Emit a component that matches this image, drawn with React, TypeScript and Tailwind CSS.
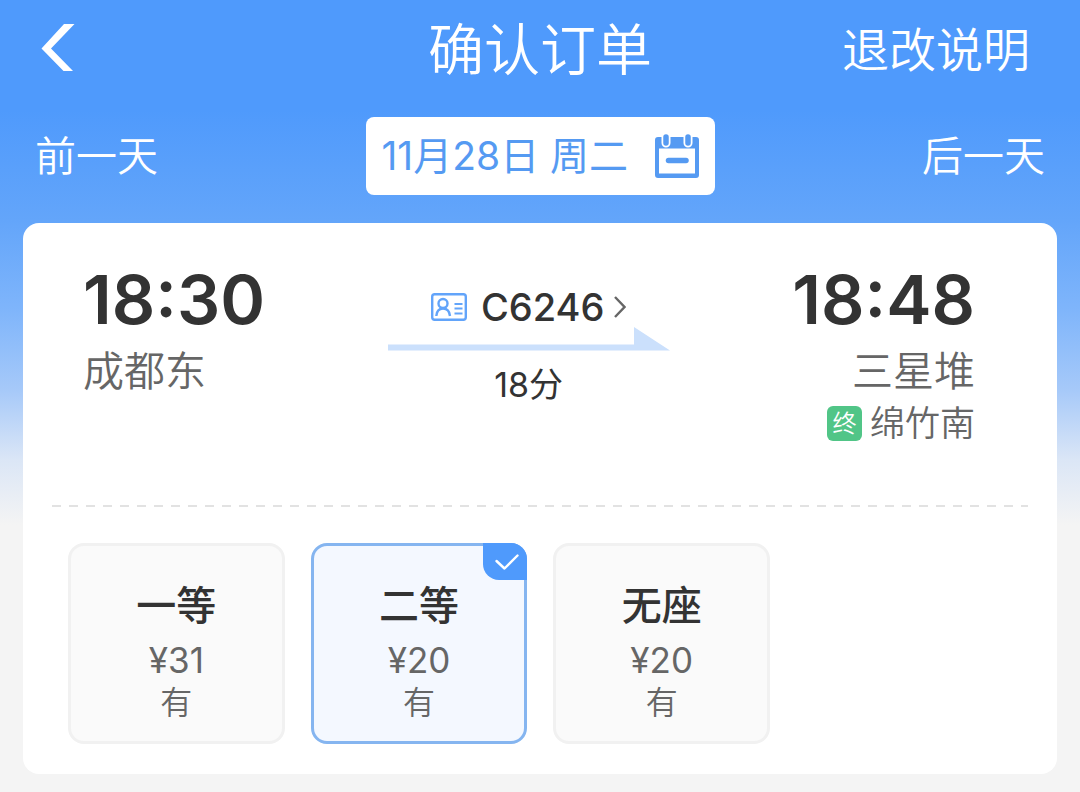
import { useState } from "react";

type Seat = {
  id: string;
  name: string;
  price: number;
  stock: string;
};

const seats: Seat[] = [
  { id: "first", name: "一等", price: 31, stock: "有" },
  { id: "second", name: "二等", price: 20, stock: "有" },
  { id: "standing", name: "无座", price: 20, stock: "有" },
];

function BackIcon() {
  return (
    <svg className="h-12 w-9" viewBox="0 0 36 48" fill="none" aria-hidden>
      <path d="M24 0h10.500L11 24.500 33 47H23.500L1.500 24.500z" fill="#fff" />
    </svg>
  );
}

function CalendarIcon() {
  return (
    <svg className="h-11 w-11 shrink-0" viewBox="0 0 44 44" fill="none" aria-hidden>
      <path
        fillRule="evenodd"
        d="M3 3h38a3 3 0 0 1 3 3v35a3 3 0 0 1-3 3H3a3 3 0 0 1-3-3V6a3 3 0 0 1 3-3zM4 14.500V39.500h36V14.500z"
        fill="#559af2"
      />
      <path d="M11 3v6M33 3v6" stroke="#fff" strokeWidth="9" strokeLinecap="round" />
      <path d="M11 3v6M33 3v6" stroke="#559af2" strokeWidth="5.500" strokeLinecap="round" />
      <path d="M13.500 26.500h17.500" stroke="#559af2" strokeWidth="5.500" strokeLinecap="round" />
    </svg>
  );
}

function IdCardIcon() {
  return (
    <svg className="h-7 w-9 shrink-0" viewBox="0 0 36 28" fill="none" stroke="#62a4fa" aria-hidden>
      <rect x="1.200" y="1.200" width="33.600" height="25.600" rx="2.500" strokeWidth="2.400" />
      <circle cx="12" cy="10.500" r="4.500" strokeWidth="2.400" />
      <path d="M5.300 23c.4-4.500 2.600-7.500 6.700-7.500s6.500 3 7 7.500" strokeWidth="2.400" />
      <path d="M23.500 11h8M23.500 15.500h8M23.500 20.500h8" strokeWidth="2" />
    </svg>
  );
}

// 车次下方的方向箭头
function RouteArrow() {
  return (
    <svg className="h-6 w-full" viewBox="0 0 282 24" fill="#cbe0fc" aria-hidden>
      <path d="M0 17.500h246V0l36 23.500H0z" />
    </svg>
  );
}

function SeatOption({
  seat,
  checked,
  onSelect,
}: {
  seat: Seat;
  checked: boolean;
  onSelect: () => void;
}) {
  return (
    <label
      className={`relative flex flex-1 cursor-pointer flex-col items-center rounded-2xl border-3 pt-8 pb-[18px] ${
        checked ? "border-[#85b5f0] bg-[#f4f8ff]" : "border-[#f1f1f1] bg-[#fafafa]"
      }`}
    >
      <input
        type="radio"
        name="seat"
        value={seat.id}
        checked={checked}
        onChange={onSelect}
        className="absolute inset-0 cursor-pointer appearance-none"
      />
      <span className="text-[40px] leading-[56px] font-medium text-[#333]">{seat.name}</span>
      <span className="mt-1 text-[35px] leading-[44px] font-normal text-[#666]">¥{seat.price}</span>
      <span className="text-[32px] leading-[41px] font-[350] text-[#666]">{seat.stock}</span>
      {checked && (
        <span className="absolute -top-[3px] -right-[3px] flex h-[37px] w-11 items-center justify-center rounded-tr-2xl rounded-bl-2xl bg-[#4f9afc]">
          <svg className="ml-1 h-4 w-6" viewBox="0 0 24 16" fill="none" aria-hidden>
            <path
              d="M1.500 7 9.500 14.500 22.500 1.500"
              stroke="#fff"
              strokeWidth="2.400"
              strokeLinecap="round"
              strokeLinejoin="round"
            />
          </svg>
        </span>
      )}
    </label>
  );
}

export default function App() {
  const [selected, setSelected] = useState("second");

  return (
    <div className="min-h-screen bg-[#f4f4f4] bg-[linear-gradient(180deg,#4f9afc_0px,#4f9afc_110px,#63a5fa_220px,#7fb5fb_310px,#a6c9f9_390px,#dbe6f6_460px,#f4f4f4_525px)] pb-[18px] font-['Inter','Noto_Sans_CJK_SC',sans-serif]">
      <header className="grid grid-cols-3 items-center px-10 pt-1.5 text-white">
        <button type="button" aria-label="返回" className="justify-self-start">
          <BackIcon />
        </button>
        <h1 className="pt-1 text-center text-[56px] leading-[80px] font-[350] whitespace-nowrap">
          确认订单
        </h1>
        <a
          href="#rules"
          className="mr-[10px] justify-self-end pt-1 text-[47px] leading-[80px] font-[350] whitespace-nowrap"
        >
          退改说明
        </a>
      </header>

      <nav className="mt-[27px] flex items-center justify-between px-[35px] text-white">
        <button type="button" className="text-[41px] leading-[56px] font-[350]">
          前一天
        </button>
        <button
          type="button"
          className="flex h-[78px] w-[349px] items-center justify-between rounded-lg bg-white px-4 text-[#559af2]"
        >
          <span className="text-[39px] leading-[56px] font-normal whitespace-nowrap">
            11月28日 周二
          </span>
          <CalendarIcon />
        </button>
        <button type="button" className="text-[41px] leading-[56px] font-[350]">
          后一天
        </button>
      </nav>

      <main className="mx-[23px] mt-7 rounded-2xl bg-white pb-[30px]">
        <section className="flex items-start justify-between pt-10 pr-[82px] pl-[60px]">
          <div>
            <p className="text-[68px] leading-[72px] font-semibold text-[#333] [font-feature-settings:'case']">
              18:30
            </p>
            <p className="mt-2 text-[41px] leading-[56px] font-[350] text-[#666]">成都东</p>
          </div>

          <div className="flex w-[282px] flex-col items-center pt-6">
            <a href="#train" className="flex items-center gap-[14px] text-[#333]">
              <IdCardIcon />
              <span className="flex items-center gap-[10px] text-[38px] leading-[40px] font-medium">
                C6246
                <svg className="h-[22px] w-3" viewBox="0 0 12 22" fill="none" aria-hidden>
                  <path d="M1 1l9.500 10L1 21" stroke="#666" strokeWidth="2.400" />
                </svg>
              </span>
            </a>
            <RouteArrow />
            <p className="mt-3 text-[34px] leading-[44px] font-normal text-[#333]">18分</p>
          </div>

          <div className="flex flex-col items-end">
            <p className="text-[68px] leading-[72px] font-semibold text-[#333] [font-feature-settings:'case']">
              18:48
            </p>
            <p className="mt-2 text-[41px] leading-[56px] font-[350] text-[#666]">三星堆</p>
            <p className="flex items-center gap-2 text-[35px] leading-[48px] font-[350] text-[#666]">
              <span className="flex h-[35px] w-[35px] items-center justify-center rounded-md bg-[#51c587] text-[24px] leading-[35px] text-white">
                终
              </span>
              绵竹南
            </p>
          </div>
        </section>

        <div className="mx-[29px] mt-[58px] h-[2px] bg-[repeating-linear-gradient(90deg,#e2e2e2_0px,#e2e2e2_9px,transparent_9px,transparent_17px)]" />

        <fieldset
          aria-label="席别"
          className="mt-9 flex w-[792px] max-w-full gap-[26px] px-[45px]"
        >
          {seats.map((seat) => (
            <SeatOption
              key={seat.id}
              seat={seat}
              checked={seat.id === selected}
              onSelect={() => setSelected(seat.id)}
            />
          ))}
        </fieldset>
      </main>
    </div>
  );
}
